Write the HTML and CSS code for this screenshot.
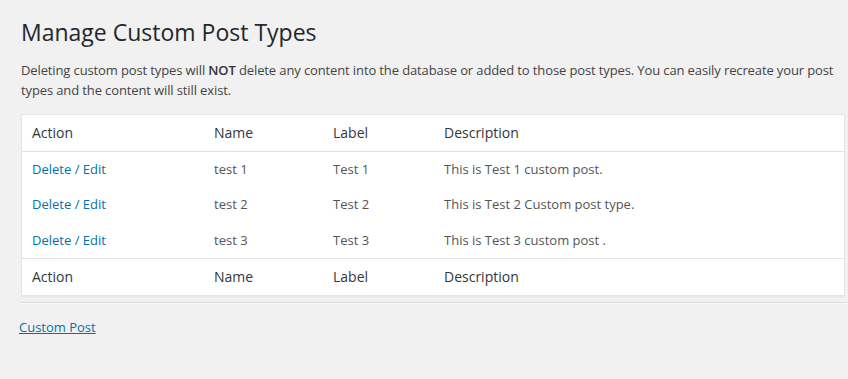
FILE: index.html
```html
<!DOCTYPE html>
<html>
<head>
<meta charset="utf-8">
<link rel="stylesheet" href="styles.css">
</head>
<body>
<div class="page">
  <div class="wrap">
    <h2 class="title">Manage Custom Post Types</h2>
    <p class="intro">Deleting custom post types will <strong>NOT</strong> delete any content into the database or added to those post types. You can easily recreate your post types and the content will still exist.</p>
    <table class="widefat">
      <thead>
        <tr><th class="c-action">Action</th><th class="c-name">Name</th><th class="c-label">Label</th><th>Description</th></tr>
      </thead>
      <tbody>
        <tr><td><a href="#">Delete</a><span class="sep"> / </span><a href="#">Edit</a></td><td>test 1</td><td>Test 1</td><td>This is Test 1 custom post.</td></tr>
        <tr><td><a href="#">Delete</a><span class="sep"> / </span><a href="#">Edit</a></td><td>test 2</td><td>Test 2</td><td>This is Test 2 Custom post type.</td></tr>
        <tr><td><a href="#">Delete</a><span class="sep"> / </span><a href="#">Edit</a></td><td>test 3</td><td>Test 3</td><td>This is Test 3 custom post .</td></tr>
      </tbody>
      <tfoot>
        <tr><th>Action</th><th>Name</th><th>Label</th><th>Description</th></tr>
      </tfoot>
    </table>
  </div>
  <hr class="divider">
  <a class="footer-link" href="#">Custom Post</a>
</div>
</body>
</html>
```

FILE: styles.css
```css
html, body {
  margin: 0;
  padding: 0;
  background: #f1f1f1;
}
body {
  font-family: "Open Sans", "Noto Sans", sans-serif;
  font-size: 13px;
  line-height: 1.5;
  color: #444;
}
.page {
  padding-left: 19px;
}
.wrap {
  margin: 0 3px 0 2px;
}
.title {
  margin: 0;
  padding: 18px 0 3px 0;
  font-size: 23px;
  font-weight: 400;
  line-height: 29px;
  color: #23282d;
}
.intro {
  margin: 11px 0 14px 0;
  font-size: 13px;
  line-height: 1.5;
  letter-spacing: -0.12px;
}
.intro strong {
  font-weight: 600;
  color: #333;
}
.widefat {
  width: 100%;
  border-spacing: 0;
  border: 1px solid #e5e5e5;
  background: #fff;
  box-shadow: 0 1px 1px rgba(0, 0, 0, 0.04);
}
.widefat th {
  text-align: left;
  font-weight: 400;
  font-size: 14px;
  line-height: 1.4em;
  color: #32373c;
  padding: 8px 10px;
}
.widefat thead th {
  border-bottom: 1px solid #e1e1e1;
}
.widefat tfoot th {
  border-top: 1px solid #e1e1e1;
}
.widefat td {
  font-size: 13px;
  line-height: 1.5em;
  color: #555;
  padding: 8px 10px;
  vertical-align: top;
}
.c-action { width: 162px; }
.c-name { width: 99px; }
.c-label { width: 91px; }
.widefat a {
  color: #0073aa;
  text-decoration: none;
}
.sep {
  color: #0073aa;
}
.divider {
  border: 0;
  border-top: 1px solid #dddddd;
  border-bottom: 1px solid #fafafa;
  margin: 6px 0 14px 0;
  height: 0;
}
.footer-link {
  color: #0073aa;
  text-decoration: underline;
  font-size: 13px;
  line-height: 19.5px;
}
```
